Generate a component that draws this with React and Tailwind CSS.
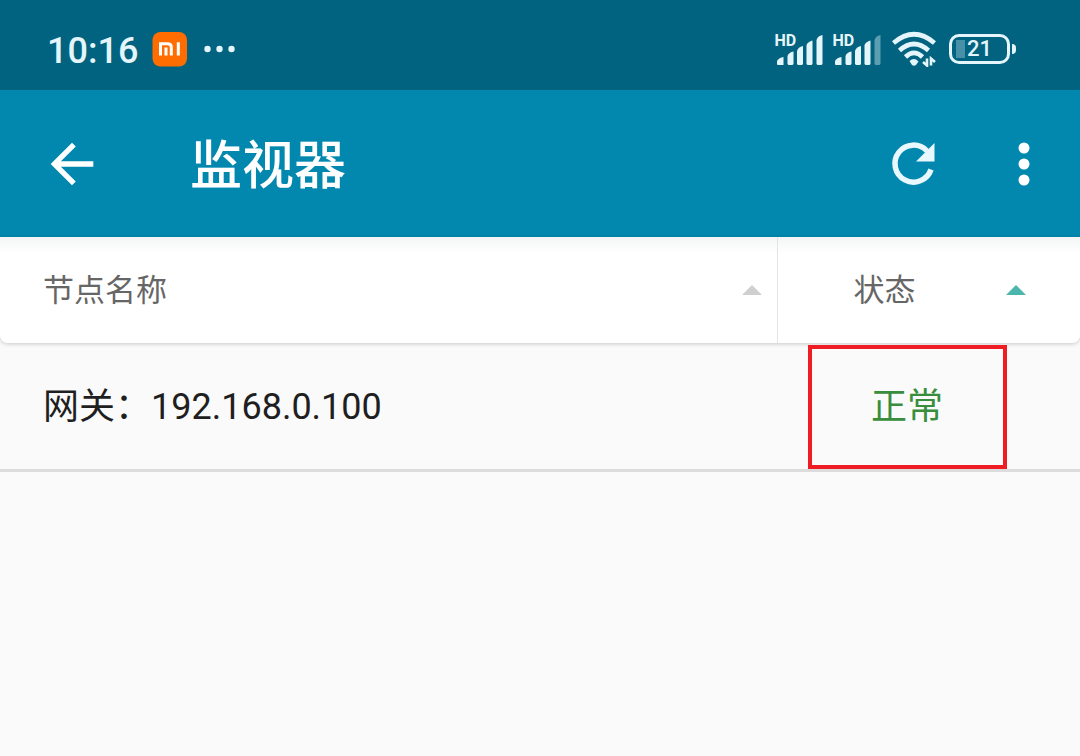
import React, { useState } from 'react';
import { MdArrowBack } from 'react-icons/md';

const nodes = [{ id: 1, name: '网关：192.168.0.100', status: '正常' }];

const MiLogo = () => (
  <svg viewBox="0 0 36 36" className="ml-3.5 h-9 w-9" aria-label="Mi">
    <rect x="0.500" y="1" width="34.500" height="34.500" rx="8" fill="#ff6d00" />
    <path d="M8.500 24.500V12.700H15.500C18.200 12.700 19.300 14 19.300 16.200V24.500" fill="none" stroke="#fff" strokeWidth="3" />
    <path d="M14 16.500V24.500M26.300 11.300V24.500" fill="none" stroke="#fff" strokeWidth="3" />
  </svg>
);

// Signal strength, the last bar is dimmed when the signal is not full
const Signal = ({ full }) => (
  <svg viewBox="0 0 50 36" className="h-9 w-[50px]" fill="currentColor">
    <text x="-0.500" y="15" fontSize="16" fontWeight="700" fontFamily="Roboto">HD</text>
    <path d="M2 33V30Q4 26.500 8.500 26V34H3Q2 34 2 33Z" />
    <path d="M12.500 33V25Q14 21 18.500 20.500V33L17.500 34H13.500L12.500 33Z" />
    <path d="M22 33V20Q23 16 28 15V33L27 34H23L22 33Z" />
    <path d="M31.500 33V14Q33 10.500 37.500 9.500V33L36.500 34H32.500L31.500 33Z" />
    <path d="M41.500 33V9Q42.500 5 47.500 4V33L46.500 34H42.500L41.500 33Z" opacity={full ? 1 : 0.4} />
  </svg>
);

const Wifi = () => (
  <svg viewBox="0 0 46 36" className="h-9 w-[46px]" fill="none" stroke="currentColor" strokeWidth="4.600">
    <path d="M2.500 12Q23 -5.500 43.500 12" />
    <path d="M8.500 19.500Q23 6.500 37.500 19.500" />
    <path d="M14.500 26Q23 17.500 31.500 26" />
    <path d="M18.500 30Q23 26 27.500 30.500L25 34Q23 35.500 21 34Z" fill="currentColor" stroke="none" />
    <path d="M36 27.500V34.500L32 31M40 34.500V27.500L44 31" strokeWidth="2.600" />
  </svg>
);

const Battery = ({ level }) => (
  <div className="flex items-center gap-0.5">
    <div className="flex h-[30px] w-[61px] items-center justify-center rounded-[10px] border-3 border-[#e4f5fc] bg-[linear-gradient(90deg,transparent_4px,#4890a8_4px,#4890a8_13px,transparent_13px)] bg-[length:100%_18px] bg-center bg-no-repeat text-[22px] font-medium leading-none">
      {level}
    </div>
    <div className="h-2.5 w-1 rounded-r-sm bg-[#e4f5fc]" />
  </div>
);

const StatusBar = () => (
  <div className="flex h-[90px] items-center bg-[#01637f] pl-[47px] pr-16 pb-2 pt-4 text-[#e4f5fc]">
    <span className="pt-1 text-4xl font-medium">10:16</span>
    <MiLogo />
    <svg viewBox="0 0 32 8" className="ml-4 h-2 w-8" fill="currentColor">
      <circle cx="3.500" cy="4" r="3.200" />
      <circle cx="15.500" cy="4" r="3.200" />
      <circle cx="27.500" cy="4" r="3.200" />
    </svg>
    <div className="ml-auto flex items-center gap-2">
      <Signal full />
      <Signal />
      <Wifi />
      <div className="ml-1">
        <Battery level={21} />
      </div>
    </div>
  </div>
);

const SortArrow = ({ active }) => (
  <svg viewBox="0 0 20 10" className={active ? 'h-2.5 w-5 text-[#4db6ac]' : 'h-2.5 w-5 text-[#cfcfcf]'} fill="currentColor">
    <path d="M0 10L10 0L20 10Z" />
  </svg>
);

const AppBar = () => (
  <header className="flex h-[147px] items-center bg-[#0288af] pl-10 pr-[23px] text-white">
    <button type="button" aria-label="返回">
      <MdArrowBack className="h-16 w-16" />
    </button>
    <h1 className="ml-[86px] pt-1.5 text-[52px] font-medium leading-none">监视器</h1>
    <button type="button" aria-label="刷新" className="ml-auto text-[#e8f8fe]">
      <svg viewBox="0 0 48 48" className="h-12 w-12" fill="none" stroke="currentColor" strokeWidth="5.500">
        <path d="M42 29.500A18.500 18.500 0 1 1 38 11" />
        <path d="M45.500 3V21.500H27Z" fill="currentColor" stroke="none" />
      </svg>
    </button>
    <button type="button" aria-label="更多" className="ml-16">
      <svg viewBox="0 0 56 48" className="h-12 w-14" fill="currentColor">
        <circle cx="23" cy="8" r="5.500" />
        <circle cx="23" cy="24" r="5.500" />
        <circle cx="23" cy="40" r="5.500" />
      </svg>
    </button>
  </header>
);

const App = () => {
  const [sortBy, setSortBy] = useState('status');

  return (
    <div className="min-h-screen bg-[#fafafa] font-['Roboto','Noto_Sans_CJK_SC',sans-serif]">
      <StatusBar />
      <AppBar />
      <table className="w-full table-fixed border-separate border-spacing-0">
        <thead>
          <tr className="rounded-b-lg shadow-[0_1px_4px_rgba(0,0,0,0.2)]">
            <th className="w-[72%] rounded-bl-lg border-r border-[#e4e4e4] bg-linear-to-b from-[#f3f5f5] to-white to-15% p-0 font-normal">
              <button
                type="button"
                onClick={() => setSortBy('name')}
                className="flex h-[106px] w-full items-center justify-between pl-[43px] pr-[15px] text-[31px] text-[#666666]"
              >
                <span className="pt-0.5">节点名称</span>
                <SortArrow active={sortBy === 'name'} />
              </button>
            </th>
            <th className="rounded-br-lg bg-linear-to-b from-[#f3f5f5] to-white to-15% p-0 font-normal">
              <button
                type="button"
                onClick={() => setSortBy('status')}
                className="flex h-[106px] w-full items-center justify-between pl-[76px] pr-[54px] text-[31px] text-[#666666]"
              >
                <span className="pt-0.5">状态</span>
                <SortArrow active={sortBy === 'status'} />
              </button>
            </th>
          </tr>
        </thead>
        <tbody>
          {nodes.map((node) => (
            <tr key={node.id}>
              <td className="border-b-3 border-[#dcdcdc] p-0 pl-[43px] pt-0.5 text-4xl text-[#1f1f1f]">{node.name}</td>
              <td className="border-b-3 border-[#dcdcdc] p-0 pl-[30px] pt-0.5">
                <div className="flex h-[124px] w-[199px] items-center justify-center border-4 border-[#f01c24] text-4xl text-[#388e3c]">
                  {node.status}
                </div>
              </td>
            </tr>
          ))}
        </tbody>
      </table>
    </div>
  );
};

export default App;
